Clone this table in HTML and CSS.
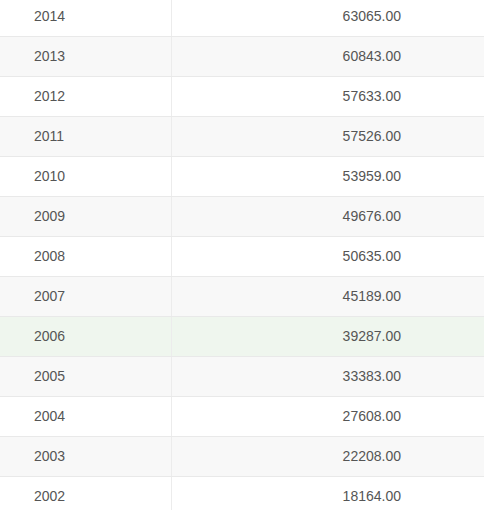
FILE: index.html
```html
<!DOCTYPE html>
<html>
<head>
<meta charset="utf-8">
<link rel="stylesheet" href="styles.css">
</head>
<body>
<table class="data">
<tbody>
<tr><td class="year">2014</td><td class="val">63065.00</td></tr>
<tr class="alt"><td class="year">2013</td><td class="val">60843.00</td></tr>
<tr><td class="year">2012</td><td class="val">57633.00</td></tr>
<tr class="alt"><td class="year">2011</td><td class="val">57526.00</td></tr>
<tr><td class="year">2010</td><td class="val">53959.00</td></tr>
<tr class="alt"><td class="year">2009</td><td class="val">49676.00</td></tr>
<tr><td class="year">2008</td><td class="val">50635.00</td></tr>
<tr class="alt"><td class="year">2007</td><td class="val">45189.00</td></tr>
<tr class="hl"><td class="year">2006</td><td class="val">39287.00</td></tr>
<tr class="alt"><td class="year">2005</td><td class="val">33383.00</td></tr>
<tr><td class="year">2004</td><td class="val">27608.00</td></tr>
<tr class="alt"><td class="year">2003</td><td class="val">22208.00</td></tr>
<tr><td class="year">2002</td><td class="val">18164.00</td></tr>
</tbody>
</table>
</body>
</html>
```
FILE: styles.css
```css
html, body {
  margin: 0;
  padding: 0;
  background: #fff;
}
.data {
  width: 484px;
  border-collapse: collapse;
  margin-top: -3px;
  font-family: "Liberation Sans", Arial, sans-serif;
  font-size: 14px;
  color: #555;
}
.data td {
  height: 38px;
  padding: 0 0 1px 0;
  border-bottom: 1px solid #e9e9e9;
  vertical-align: middle;
}
.data .year {
  width: 137px;
  padding-left: 34px;
  border-right: 1px solid #ececec;
}
.data .val {
  text-align: right;
  padding-right: 83px;
}
.data .alt {
  background: #f8f8f8;
}
.data .hl {
  background: #eff6ee;
}
```
